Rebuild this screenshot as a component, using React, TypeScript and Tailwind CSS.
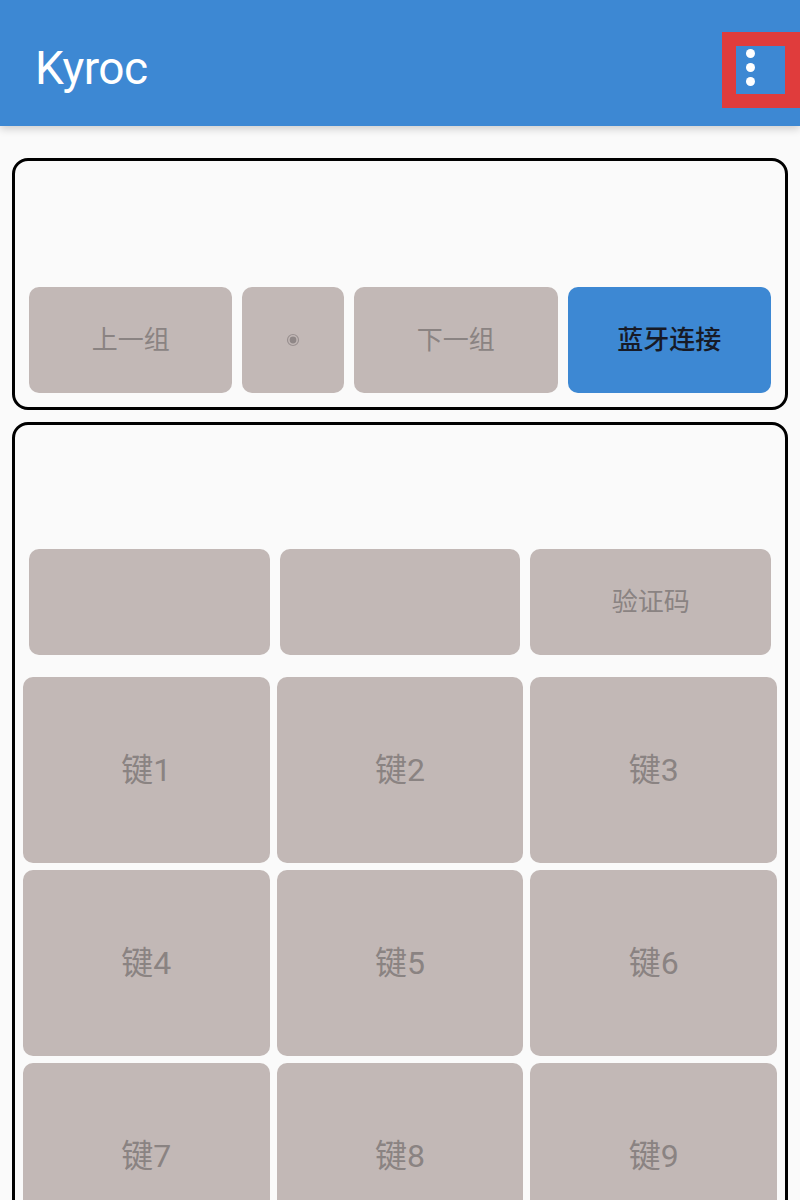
import React from 'react'

const FONT = { fontFamily: 'Roboto, "Noto Sans CJK SC", "Noto Sans", sans-serif' }

const KEYS = ['键1', '键2', '键3', '键4', '键5', '键6', '键7', '键8', '键9']

const GrayButton = ({ label, className = '' }: { label?: string; className?: string }) => (
  <button className={`flex items-center justify-center rounded-[10px] bg-[#c2b8b6] text-[26px] text-[#8a8382] ${className}`}>
    {label}
  </button>
)

const App = () => {
  return (
    <div className="w-[800px] h-[1200px] overflow-hidden bg-[#fafafa]" style={FONT}>
      {/* App bar */}
      <header className="relative z-10 flex h-[126px] items-start justify-between bg-[#3d88d3] shadow-[0_3px_8px_rgba(0,0,0,0.18)]">
        <h1 className="mt-[41px] pl-[35px] text-[46px] leading-[54px] tracking-[-0.5px] text-white">Kyroc</h1>
        <div className="mt-[32px] flex h-[76px] w-[78px] items-start border-[14px] border-r-[15px] border-[#e03c3c] pl-[10px] pt-[3px]">
          <div className="flex flex-col gap-[5px]">
            <span className="block h-[9px] w-[9px] rounded-full bg-white" />
            <span className="block h-[9px] w-[9px] rounded-full bg-white" />
            <span className="block h-[9px] w-[9px] rounded-full bg-white" />
          </div>
        </div>
      </header>

      {/* Group panel */}
      <section className="mx-[12px] mt-[32px] rounded-[16px] border-[3px] border-black px-[14px] pb-[14px] pt-[126px]">
        <div className="flex h-[106px] gap-[10px]">
          <GrayButton label="上一组" className="flex-[2]" />
          <button className="flex flex-1 items-center justify-center rounded-[10px] bg-[#c2b8b6]">
            <svg width="14" height="14" viewBox="0 0 14 14">
              <circle cx="7" cy="7" r="5.5" fill="none" stroke="#9a9191" strokeWidth="1.2" />
              <circle cx="7" cy="7" r="3.4" fill="#8f8787" />
            </svg>
          </button>
          <GrayButton label="下一组" className="flex-[2]" />
          <button className="flex flex-[2] items-center justify-center rounded-[10px] bg-[#3d88d3] text-[26px] font-medium text-[#171a26]">
            蓝牙连接
          </button>
        </div>
      </section>

      {/* Keys panel */}
      <section className="mx-[12px] mt-[12px] rounded-[16px] border-[3px] border-black px-[8px] pt-[124px] pb-[14px]">
        <div className="mx-[6px] flex h-[106px] gap-[10px]">
          <GrayButton className="flex-1" />
          <GrayButton className="flex-1" />
          <GrayButton label="验证码" className="flex-1" />
        </div>
        <div className="mt-[22px] grid grid-cols-3 gap-[7px]">
          {KEYS.map(k => (
            <GrayButton key={k} label={k} className="h-[186px] text-[32px]" />
          ))}
        </div>
      </section>
    </div>
  )
}

export default App
